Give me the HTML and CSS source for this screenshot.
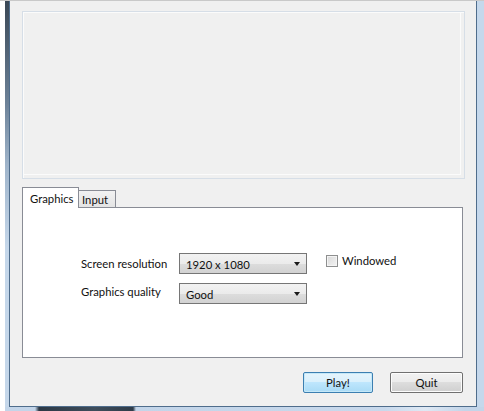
FILE: index.html
```html
<!DOCTYPE html>
<html>
<head>
<meta charset="utf-8">
<link rel="stylesheet" href="styles.css">
</head>
<body>
<div class="screen">
  <div class="frame">
    <div class="dialog">
      <div class="preview"></div>
      <div class="tabs">
        <div class="tab tab-active">Graphics</div>
        <div class="tab tab-idle">Input</div>
      </div>
      <div class="pane">
        <div class="form">
          <div class="label">Screen resolution</div>
          <div class="combo"><span>1920 x 1080</span><span class="arrow"></span></div>
          <div class="check"><span class="box"></span><span>Windowed</span></div>
          <div class="label label-2">Graphics quality</div>
          <div class="combo"><span>Good</span><span class="arrow"></span></div>
        </div>
      </div>
      <div class="buttons">
        <div class="btn btn-default">Play!</div>
        <div class="btn btn-quit">Quit</div>
      </div>
    </div>
  </div>
</div>
</body>
</html>
```
FILE: styles.css
```css
html, body {
  margin: 0;
  padding: 0;
  background: #ffffff;
}
body {
  font-family: Lato, "Liberation Sans", sans-serif;
  font-size: 11.3px;
  color: #111111;
}
.screen {
  width: 484px;
  height: 411px;
  box-sizing: border-box;
  border-top: 1px solid #c9c9c9;
  padding-left: 5px;
  display: flex;
}
.frame {
  flex: 1;
  display: flex;
  padding: 0 7px 4px 4px;
  background:
    linear-gradient(to right, #c3d5e9 30px, #2c3845 34px, #3e4d5b 90px, #2f3c49 128px, #c3d5e9 131px, #c8d9ec 380px, #dfe9f4 420px, #c3d5e9 460px) left bottom / 100% 4px no-repeat,
    linear-gradient(to bottom, #3a4755 0, #6d8298 25%, #9fb4ca 40%, #c5d7ea 60%, #c5d7ea 100%) left top / 4px 100% no-repeat,
    #c5d8ec;
}
.dialog {
  flex: 1;
  display: flex;
  flex-direction: column;
  background: #f0f0f0;
  border: 1px solid #4f6d8c;
  border-top: none;
  padding: 10px 11px 13px 12px;
}
.preview {
  height: 168px;
  box-sizing: border-box;
  border: 1px solid #d6dee7;
  box-shadow: inset 1px 1px 0 #fbfbfb, inset -3px -3px 0 #f0f0f0, inset -4px -4px 0 #fbfbfb;
  background: #f0f0f0;
}
.tabs {
  margin-top: 8px;
  height: 20px;
  display: flex;
  align-items: flex-end;
}
.tab {
  box-sizing: border-box;
  border: 1px solid #898c95;
  border-bottom: none;
  display: flex;
  align-items: center;
}
.tab-active {
  width: 57px;
  height: 21px;
  margin-bottom: -1px;
  padding-left: 7px;
  background: #ffffff;
  position: relative;
  z-index: 1;
}
.tab-idle {
  width: 37px;
  height: 17px;
  border-left: none;
  padding-left: 3px;
  padding-top: 1px;
  background: linear-gradient(#f2f2f2, #e4e4e4);
}
.pane {
  height: 151px;
  box-sizing: border-box;
  margin-right: 2px;
  border: 1px solid #898c95;
  background: #ffffff;
  padding: 45px 0 0 58px;
}
.form {
  display: grid;
  grid-template-columns: 98px 128px auto;
  grid-template-rows: 21px 21px;
  row-gap: 9px;
  align-items: center;
}
.label {
  line-height: 14px;
}
.label-2 {
  margin-bottom: 3px;
}
.combo {
  height: 21px;
  box-sizing: border-box;
  border: 1px solid #767676;
  background: linear-gradient(#f2f2f2 0%, #ebebeb 50%, #dddddd 50%, #d2d2d2 100%);
  display: flex;
  align-items: center;
  justify-content: space-between;
  padding: 0 6px 0 6px;
}
.combo span:first-child {
  padding-top: 1px;
}
.arrow {
  width: 0;
  height: 0;
  border-left: 3.5px solid transparent;
  border-right: 3.5px solid transparent;
  border-top: 4px solid #1a1a1a;
}
.check {
  align-self: start;
  margin-top: 2px;
  margin-left: 19px;
  display: flex;
  align-items: center;
  gap: 4px;
  line-height: 12px;
}
.box {
  width: 12px;
  height: 12px;
  box-sizing: border-box;
  border: 1px solid #8e8f8f;
  background: linear-gradient(135deg, #d8d8d8, #f4f4f4);
  box-shadow: inset 0 0 0 1px #f4f4f4;
}
.buttons {
  margin-top: 14px;
  margin-right: 2px;
  display: flex;
  justify-content: flex-end;
  gap: 17px;
}
.btn {
  height: 21px;
  box-sizing: border-box;
  display: flex;
  align-items: center;
  justify-content: center;
  border-radius: 2px;
}
.btn-default {
  width: 70px;
  border: 1px solid #3c7fb1;
  background: linear-gradient(#e5f4fc 0%, #d9f0fc 50%, #bee6fd 50%, #a9dbf6 100%);
  box-shadow: inset 0 0 0 1px #c5e8f8;
}
.btn-quit {
  width: 73px;
  border: 1px solid #707070;
  background: linear-gradient(#f2f2f2 0%, #ebebeb 50%, #dddddd 50%, #cfcfcf 100%);
  box-shadow: inset 0 0 0 1px #fcfcfc;
}
```
